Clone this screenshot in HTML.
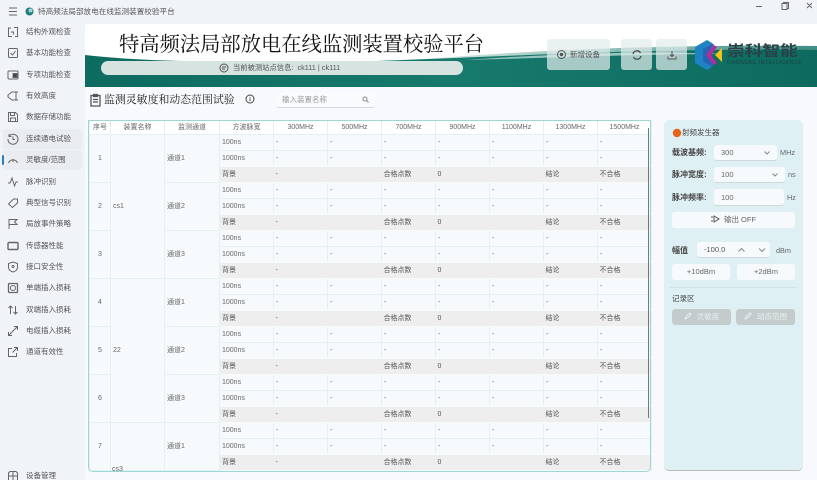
<!DOCTYPE html>
<html lang="zh"><head><meta charset="utf-8"><title>特高频法局部放电在线监测装置校验平台</title>
<style>
*{box-sizing:border-box}
html,body{margin:0;padding:0;overflow:hidden;background:#f0f3f8}
body{width:817px;height:480px;overflow:hidden;position:relative;background:#f0f3f8;font-family:"Liberation Sans","Noto Sans CJK SC",sans-serif;color:#444;font-size:7.5px;filter:blur(.3px)}
.a{position:absolute;white-space:nowrap}
.nav{position:absolute;left:26px;font-size:7.5px;color:#555;line-height:10px;white-space:nowrap}
.ic{position:absolute;left:7px;width:12px;height:12px;fill:none;stroke:#666;stroke-width:1}
#main{position:absolute;left:85px;top:24px;width:732px;height:456px;background:#f7f9fd}
table{position:absolute;left:89px;top:121px;width:562px;border-collapse:collapse;table-layout:fixed;font-size:7px;color:#666;background:#f7fafd}
td,th{height:16px;padding:0 0 0 2px;border:1px solid #e2f2f3;font-weight:normal;line-height:9px;overflow:hidden;white-space:nowrap}
th{height:13px;background:#fff;text-align:center;padding:0;color:#666;border-top:0;border-bottom:0;font-size:7px}
tr:nth-child(3n) td{padding-top:2px}
.c{text-align:center;padding:0}
.b td{background:#eeeeee;border-color:#f7fafd;border-left-color:#eee;border-right-color:#eee;border-width:2px 0 1px 0;color:#555;height:16px}
#frame{position:absolute;left:88px;top:120px;width:563px;height:352px;border:1px solid #9dd6d3;border-bottom-width:1.5px;border-radius:0 0 5px 5px;pointer-events:none}
#clip{position:absolute;left:0;top:0;width:817px;height:472px;overflow:hidden}
#panel{position:absolute;left:664px;top:120px;width:139px;height:351px;background:#dff0f4;border-radius:5px;border-bottom:1px solid #bbb}
.f{position:absolute;background:#f6fafc;border-radius:3px;border-bottom:1px solid #cfd8dc;font-size:7.5px;color:#666;line-height:15px;white-space:nowrap}
.l{position:absolute;font-size:8px;color:#444;font-weight:bold;line-height:10px;white-space:nowrap}
.u{position:absolute;font-size:7.3px;color:#666;line-height:10px;white-space:nowrap}
.tb{position:absolute;top:39px;height:31px;background:rgba(225,235,235,.72);border-radius:3px;color:#555}
.dis{position:absolute;top:309px;height:16px;width:59px;background:#c4cbcd;border-radius:3px;color:#e8eeee;font-size:7.5px;line-height:16px;text-align:center}
</style></head><body>
<svg class="a" style="left:9px;top:7px" width="12" height="9" fill="none" stroke="#666"><path d="M0 1h8M0 4.5h8M0 8h8"/></svg>
<svg class="a" style="left:25px;top:7px" width="9" height="9"><circle cx="4.5" cy="4.5" r="4" fill="#1f7d74"/><circle cx="5.5" cy="3.5" r="2" fill="#9fd3e0"/></svg>
<div class="a" style="left:38px;top:6px;font-size:7.6px;line-height:11px;color:#555">特高频法局部放电在线监测装置校验平台</div>
<svg class="a" style="left:752px;top:0" width="60" height="12" fill="none" stroke="#666"><path d="M4 6.5h6M30 3.5h5v6h-5zM31.5 3.500v-1h5v6h-1M55 3l5 5M60 3l-5 5"/></svg>

<div style="position:absolute;left:3px;top:129px;width:79px;height:20px;background:#e9ecf1;border-radius:3px"></div>
<div style="position:absolute;left:3px;top:150px;width:79px;height:20px;background:#e9ecf1;border-radius:3px"></div>
<div style="position:absolute;left:2px;top:155px;width:2px;height:10px;background:#2d7fb8;border-radius:1px"></div>

<div class="nav" style="top:27px">结构外观检查</div>
<div class="nav" style="top:48px">基本功能检查</div>
<div class="nav" style="top:70px">专项功能检查</div>
<div class="nav" style="top:91px">有效高度</div>
<div class="nav" style="top:112px">数据存储功能</div>
<div class="nav" style="top:134px">连续通电试验</div>
<div class="nav" style="top:155px">灵敏度/范围</div>
<div class="nav" style="top:177px">脉冲识别</div>
<div class="nav" style="top:198px">典型信号识别</div>
<div class="nav" style="top:219px">局放事件策略</div>
<div class="nav" style="top:241px">传感器性能</div>
<div class="nav" style="top:262px">接口安全性</div>
<div class="nav" style="top:283px">单端插入损耗</div>
<div class="nav" style="top:305px">双端插入损耗</div>
<div class="nav" style="top:326px">电缆插入损耗</div>
<div class="nav" style="top:347px">通道有效性</div>
<div class="nav" style="top:471px">设备管理</div>

<svg class="ic" style="top:26px" viewBox="0 0 12 12"><path d="M4 2H1.500v8.500H5M7 1.500h3.500V10.500H8M4 6h2.500v2.500"/></svg>
<svg class="ic" style="top:47px" viewBox="0 0 12 12"><rect x="1.500" y="1.500" width="9" height="9" rx="1"/><path d="M3.500 6l2 2 3-4"/></svg>
<svg class="ic" style="top:69px" viewBox="0 0 12 12"><rect x="1" y="2" width="10" height="8" rx="1"/><rect x="6" y="4.500" width="4" height="4" fill="#444"/></svg>
<svg class="ic" style="top:90px" viewBox="0 0 12 12"><path d="M11 2H5L1 5v2l4 3h6"/><path d="M9 2v8"/></svg>
<svg class="ic" style="top:111px" viewBox="0 0 12 12"><path d="M1.500 1.500h7l2 2v7h-9zM3.500 1.500v3h4v-3M3.500 10.500V7h5v3.500"/></svg>
<svg class="ic" style="top:133px" viewBox="0 0 12 12"><path d="M2.200 3A5 5 0 1 1 1 6M2 1v2.500h2.500M6 3.500V6.500h2"/></svg>
<svg class="ic" style="top:154px" viewBox="0 0 12 12"><path d="M1.500 9A4.800 4.800 0 0 1 10.500 9M6 5v3"/></svg>
<svg class="ic" style="top:176px" viewBox="0 0 12 12"><path d="M1 7h2l2-5 2.500 8L9 6h2"/></svg>
<svg class="ic" style="top:197px" viewBox="0 0 12 12"><path d="M1.500 7l5-5h4v4l-5 4.500zM8.500 4h0"/></svg>
<svg class="ic" style="top:218px" viewBox="0 0 12 12"><path d="M2 11V1.500h8L7.500 4 10 6.500H2"/></svg>
<svg class="ic" style="top:240px" viewBox="0 0 12 12"><rect x="1" y="2.500" width="10" height="7" rx="1" stroke-width="1.400"/></svg>
<svg class="ic" style="top:261px" viewBox="0 0 12 12"><path d="M6 1l4.500 1.500V6C10.500 9 8 10.500 6 11 4 10.500 1.500 9 1.500 6V2.500z"/><circle cx="6" cy="5.500" r="1"/></svg>
<svg class="ic" style="top:282px" viewBox="0 0 12 12"><rect x="1.500" y="1.500" width="9" height="9" rx="1" stroke-width="1.300"/><circle cx="6" cy="6" r="2.500"/></svg>
<svg class="ic" style="top:304px" viewBox="0 0 12 12"><path d="M3.500 10V2M1.500 4l2-2 2 2M8.500 2v8M6.500 8l2 2 2-2"/></svg>
<svg class="ic" style="top:325px" viewBox="0 0 12 12"><path d="M1.500 10.500l9-9M7 1.500h3.500V5M5 10.500H1.500V7"/></svg>
<svg class="ic" style="top:346px" viewBox="0 0 12 12"><path d="M5 2.500H1.500v8h8V7M7 1.500h3.500V5M10.500 1.500L5.500 6.500"/></svg>
<svg class="ic" style="top:470px" viewBox="0 0 12 12"><path d="M3 1.500h6l1.500 1.500v7.500h-9V3zM1.500 6h9M6 1.500v9"/></svg>

<div id="main"></div>

<svg class="a" style="left:85px;top:24px;border-radius:4px 0 0 0" width="732" height="63" viewBox="0 0 732 63">
<defs><linearGradient id="g" x1="0" x2="1" y1="0" y2="0"><stop offset="0" stop-color="#0d6b60"/><stop offset=".5" stop-color="#177a6c"/><stop offset="1" stop-color="#0d6a5f"/></linearGradient>
<linearGradient id="g2" x1="0" x2="1" y1="0" y2="0"><stop offset="0" stop-color="#e8f2ef"/><stop offset=".5" stop-color="#8fc0b6"/><stop offset="1" stop-color="#3f8f84"/></linearGradient></defs>
<rect width="732" height="63" fill="#fff"/>
<path d="M300 38C420 28 560 20 732 22V40C560 34 420 36 300 38Z" fill="url(#g2)"/>
<path d="M0 31C70 39 150 38 290 37C430 32 570 24 732 26V63H0Z" fill="url(#g)"/>
<path d="M380 36C480 29 560 27 640 30C560 30 460 34 380 36Z" fill="#cfe5df" opacity=".7"/>
<rect x="16" y="37" width="362" height="14" rx="7" fill="#d6e3e1"/>
</svg>
<div class="a" style="left:119px;top:31px;font-family:'Liberation Serif','Noto Serif CJK SC',serif;font-size:20.3px;line-height:28px;color:#111">特高频法局部放电在线监测装置校验平台</div>
<svg class="a" style="left:219px;top:63px" width="10" height="10" fill="none" stroke="#555"><circle cx="5" cy="5" r="4"/><path d="M3 4h4M3 6h3"/></svg>
<div class="a" style="left:233px;top:63px;font-size:7.3px;line-height:10px;color:#555">当前被测站点信息:&nbsp; ck111 | ck111</div>

<div class="tb" style="left:547px;width:63px"><svg class="a" style="left:10px;top:11px" width="9" height="9" fill="none" stroke="#555"><circle cx="4.500" cy="4.500" r="4"/><circle cx="4.500" cy="4.500" r="1.200" fill="#555"/></svg><span class="a" style="left:23px;top:10px;font-size:7.5px;line-height:11px">新增设备</span></div>
<div class="tb" style="left:621px;width:31px"><svg class="a" style="left:11px;top:11px" width="10" height="10" fill="none" stroke="#444" stroke-width="1.200"><path d="M1 4A4 4 0 0 1 8.500 3M9 6A4 4 0 0 1 1.500 7"/></svg></div>
<div class="tb" style="left:656px;width:31px"><svg class="a" style="left:11px;top:11px" width="10" height="10" fill="none" stroke="#555"><path d="M5 1v5.500M3 4.500l2 2 2-2M1 6.500v2.500h8V6.500"/></svg></div>

<svg class="a" style="left:694px;top:39px" width="30" height="32" viewBox="0 0 30 32">
<path d="M13 1L1 8v16l12 7 5-3-9-6V10l9-6z" fill="#1d84c4"/>
<path d="M18 4l-9 6 0 12 9 6 2-2-8-10 8-10z" fill="#2a62b8"/>
<path d="M20 6L12 16l8 10 3-2-6-8 6-8z" fill="#b52c9c"/>
<path d="M28 9l-7 7 7 7z" fill="#f2c418"/></svg>
<div class="a" style="left:727px;top:44px;font-size:14.5px;line-height:16px;font-weight:bold;color:#2a4048;transform:scaleX(1.22);transform-origin:left top">崇科智能</div>
<div class="a" style="left:727px;top:60px;font-size:5px;line-height:6px;color:#1d3c3c;letter-spacing:.62px">CHONGKE INTELLIGENCE</div>

<svg class="a" style="left:89px;top:93px" width="13" height="14" fill="none" stroke="#555" stroke-width="1.300"><path d="M2 2.500h9v10.500H2zM4.500 1.500h4v2h-4zM4 6.500h5M4 9h5"/></svg>
<div class="a" style="left:104px;top:93px;font-family:'Liberation Serif','Noto Serif CJK SC',serif;font-size:10.9px;line-height:15px;color:#222">监测灵敏度和动态范围试验</div>
<svg class="a" style="left:245px;top:94px" width="10" height="10" fill="none" stroke="#444"><circle cx="5" cy="5" r="4"/><path d="M5 3v.800M5 4.500v2.500"/></svg>
<div class="a" style="left:276px;top:92px;width:99px;height:16px;background:#fafbfe;border-bottom:1px solid #d5d8dc;border-radius:3px;font-size:7.5px;line-height:16px;color:#999;padding-left:6px">输入装置名称</div>
<svg class="a" style="left:362px;top:96px" width="7" height="7" fill="none" stroke="#888"><circle cx="3" cy="3" r="2"/><path d="M4.500 4.500l2 2"/></svg>

<div id="clip">
<table>
<colgroup><col style="width:21px"><col style="width:54px"><col style="width:55px"><col style="width:54px"><col style="width:54px"><col style="width:54px"><col style="width:54px"><col style="width:54px"><col style="width:54px"><col style="width:54px"><col style="width:54px"></colgroup>
<tr><th>序号</th><th>装置名称</th><th>监测通道</th><th>方波脉宽</th><th>300MHz</th><th>500MHz</th><th>700MHz</th><th>900MHz</th><th>1100MHz</th><th>1300MHz</th><th>1500MHz</th></tr>
<tr><td class="c" rowspan="3">1</td><td rowspan="9">cs1</td><td rowspan="3">通道1</td><td>100ns</td><td>-</td><td>-</td><td>-</td><td>-</td><td>-</td><td>-</td><td>-</td></tr>
<tr><td>1000ns</td><td>-</td><td>-</td><td>-</td><td>-</td><td>-</td><td>-</td><td>-</td></tr>
<tr class="b"><td>背景</td><td>-</td><td></td><td>合格点数</td><td>0</td><td></td><td>结论</td><td>不合格</td></tr>
<tr><td class="c" rowspan="3">2</td><td rowspan="3">通道2</td><td>100ns</td><td>-</td><td>-</td><td>-</td><td>-</td><td>-</td><td>-</td><td>-</td></tr>
<tr><td>1000ns</td><td>-</td><td>-</td><td>-</td><td>-</td><td>-</td><td>-</td><td>-</td></tr>
<tr class="b"><td>背景</td><td>-</td><td></td><td>合格点数</td><td>0</td><td></td><td>结论</td><td>不合格</td></tr>
<tr><td class="c" rowspan="3">3</td><td rowspan="3">通道3</td><td>100ns</td><td>-</td><td>-</td><td>-</td><td>-</td><td>-</td><td>-</td><td>-</td></tr>
<tr><td>1000ns</td><td>-</td><td>-</td><td>-</td><td>-</td><td>-</td><td>-</td><td>-</td></tr>
<tr class="b"><td>背景</td><td>-</td><td></td><td>合格点数</td><td>0</td><td></td><td>结论</td><td>不合格</td></tr>
<tr><td class="c" rowspan="3">4</td><td rowspan="9">22</td><td rowspan="3">通道1</td><td>100ns</td><td>-</td><td>-</td><td>-</td><td>-</td><td>-</td><td>-</td><td>-</td></tr>
<tr><td>1000ns</td><td>-</td><td>-</td><td>-</td><td>-</td><td>-</td><td>-</td><td>-</td></tr>
<tr class="b"><td>背景</td><td>-</td><td></td><td>合格点数</td><td>0</td><td></td><td>结论</td><td>不合格</td></tr>
<tr><td class="c" rowspan="3">5</td><td rowspan="3">通道2</td><td>100ns</td><td>-</td><td>-</td><td>-</td><td>-</td><td>-</td><td>-</td><td>-</td></tr>
<tr><td>1000ns</td><td>-</td><td>-</td><td>-</td><td>-</td><td>-</td><td>-</td><td>-</td></tr>
<tr class="b"><td>背景</td><td>-</td><td></td><td>合格点数</td><td>0</td><td></td><td>结论</td><td>不合格</td></tr>
<tr><td class="c" rowspan="3">6</td><td rowspan="3">通道3</td><td>100ns</td><td>-</td><td>-</td><td>-</td><td>-</td><td>-</td><td>-</td><td>-</td></tr>
<tr><td>1000ns</td><td>-</td><td>-</td><td>-</td><td>-</td><td>-</td><td>-</td><td>-</td></tr>
<tr class="b"><td>背景</td><td>-</td><td></td><td>合格点数</td><td>0</td><td></td><td>结论</td><td>不合格</td></tr>
<tr><td class="c" rowspan="3">7</td><td rowspan="3"></td><td rowspan="3">通道1</td><td>100ns</td><td>-</td><td>-</td><td>-</td><td>-</td><td>-</td><td>-</td><td>-</td></tr>
<tr><td>1000ns</td><td>-</td><td>-</td><td>-</td><td>-</td><td>-</td><td>-</td><td>-</td></tr>
<tr class="b"><td>背景</td><td>-</td><td></td><td>合格点数</td><td>0</td><td></td><td>结论</td><td>不合格</td></tr>
</table>
</div>
<div class="a" style="left:112px;top:465px;font-size:7px;line-height:9px;color:#666">cs3</div>
<div id="frame"></div>
<div class="a" style="left:648px;top:128px;width:1px;height:290px;background:#777"></div>

<div id="panel"></div>
<svg class="a" style="left:672px;top:128px" width="10" height="10"><circle cx="5" cy="5" r="4.200" fill="#e8641a"/></svg>
<div class="a" style="left:682px;top:128px;font-size:7.5px;line-height:10px;color:#444">射频发生器</div>

<div class="l" style="left:672px;top:148px">载波基频:</div>
<div class="f" style="left:714px;top:145px;width:63px;height:16px;padding-left:7px">300<svg class="a" style="left:50px;top:6px" width="6" height="4" fill="none" stroke="#888"><path d="M.5 .5l2.500 2.500L5.500 .5"/></svg></div>
<div class="u" style="left:780px;top:148px">MHz</div>
<div class="l" style="left:672px;top:170px">脉冲宽度:</div>
<div class="f" style="left:714px;top:167px;width:71px;height:16px;padding-left:7px">100<svg class="a" style="left:58px;top:6px" width="6" height="4" fill="none" stroke="#888"><path d="M.5 .5l2.500 2.500L5.500 .5"/></svg></div>
<div class="u" style="left:788px;top:170px">ns</div>
<div class="l" style="left:672px;top:193px">脉冲频率:</div>
<div class="f" style="left:714px;top:189px;width:70px;height:17px;padding-left:7px;line-height:17px">100</div>
<div class="u" style="left:787px;top:193px">Hz</div>
<div class="f" style="left:672px;top:212px;width:123px;height:16px;text-align:center;line-height:16px;border-bottom:0"><svg style="vertical-align:-1px;margin-right:4px" width="9" height="8" fill="none" stroke="#555"><path d="M3 1l5 3-5 3zM0 2h2M0 6h2"/></svg>输出 OFF</div>

<div class="l" style="left:672px;top:246px">幅值</div>
<div class="f" style="left:697px;top:242px;width:73px;height:16px;padding-left:7px;color:#555">-100.0<svg class="a" style="left:41px;top:6px" width="28" height="4" fill="none" stroke="#888"><path d="M.5 3.500L3.500 .5 6.500 3.500M21 .5l3 3 3-3"/></svg></div>
<div class="u" style="left:776px;top:246px">dBm</div>
<div class="f" style="left:672px;top:264px;width:58px;height:16px;text-align:center;line-height:16px;border-bottom:0">+10dBm</div>
<div class="f" style="left:737px;top:264px;width:58px;height:16px;text-align:center;line-height:16px;border-bottom:0">+2dBm</div>
<div class="a" style="left:670px;top:287px;width:127px;height:1px;background:#d0e2e6"></div>
<div class="a" style="left:672px;top:294px;font-size:7.500px;line-height:10px;color:#444">记录区</div>
<div class="dis" style="left:672px"><svg style="vertical-align:-1px;margin-right:5px" width="8" height="8" fill="none" stroke="#e8eeee"><path d="M1 7l1-2.500L6 .8 7.200 2 3.500 6z"/></svg>灵敏度</div>
<div class="dis" style="left:736px"><svg style="vertical-align:-1px;margin-right:5px" width="8" height="8" fill="none" stroke="#e8eeee"><path d="M1 7l1-2.500L6 .8 7.200 2 3.500 6z"/></svg>动态范围</div>
</body></html>
